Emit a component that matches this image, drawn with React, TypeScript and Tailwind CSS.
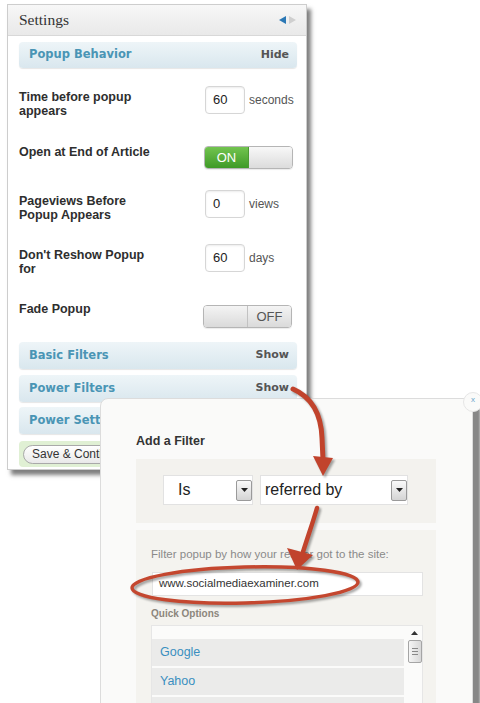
import React from "react";

function SectionHeader({ title, action, h = "h-[26px]" }: { title: string; action: string; h?: string }) {
  return (
    <div
      className={`${h} rounded-[4px] bg-linear-to-b from-[#eef5f8] to-[#d9e7ee] shadow-[0_1px_1px_rgba(0,0,0,0.10)] flex items-center justify-between pl-[10px] pr-[8px] font-['DejaVu_Sans',Verdana,sans-serif] font-bold`}
    >
      <span className="text-[11.5px] text-[#4a95b5] whitespace-nowrap">{title}</span>
      <span className="text-[11px] text-[#555]">{action}</span>
    </div>
  );
}

function NumInput({ value, unit }: { value: string; unit: string }) {
  return (
    <div className="flex items-center">
      <div className="w-[40px] h-[28px] border border-[#d6d6d6] rounded-[4px] bg-white shadow-[inset_0_1px_2px_rgba(0,0,0,0.08)] flex items-center pl-[7px] text-[13px] text-[#222]">
        {value}
      </div>
      <span className="ml-[4px] text-[12px] text-[#555]">{unit}</span>
    </div>
  );
}

function ToggleOn() {
  return (
    <div className="flex w-[89px] h-[23px] rounded-[4px] overflow-hidden border border-[#b5b5b5] shadow-[0_1px_1px_rgba(0,0,0,0.08)]">
      <div className="w-[44px] flex items-center justify-center bg-linear-to-b from-[#72c44f] to-[#3e9a27] text-white text-[13px] border-r border-[#4b9a33]">
        ON
      </div>
      <div className="flex-1 bg-linear-to-b from-[#f8f8f8] to-[#dcdcdc]" />
    </div>
  );
}

function ToggleOff() {
  return (
    <div className="flex w-[89px] h-[23px] rounded-[4px] overflow-hidden border border-[#b5b5b5] shadow-[0_1px_1px_rgba(0,0,0,0.08)]">
      <div className="w-[44px] bg-linear-to-b from-[#f4f4f4] to-[#dadada] border-r border-[#c2c2c2]" />
      <div className="flex-1 flex items-center justify-center bg-linear-to-b from-[#f4f4f4] to-[#dadada] text-[13px] text-[#555]">
        OFF
      </div>
    </div>
  );
}

function Label({ children, pt }: { children: React.ReactNode; pt: string }) {
  return (
    <div className={`w-[186px] pr-[48px] ${pt}`}>
      <p className="text-[12.5px] leading-[14px] font-bold text-[#2e2e2e]">{children}</p>
    </div>
  );
}

function SettingsPanel() {
  return (
    <div className="w-[300px] border border-[#cdcdcd] bg-white shadow-[4px_5px_4px_rgba(0,0,0,0.5)]">
      <div className="h-[31px] flex items-center justify-between pl-[11px] pr-[10px] bg-linear-to-b from-[#f7f7f7] to-[#e9e9e9] border-b border-[#d8d8d8]">
        <span className="font-['Liberation_Serif',serif] text-[15.5px] text-[#333]">Settings</span>
        <div className="flex items-center gap-[3px]">
          <svg width="7" height="8" viewBox="0 0 7 8">
            <polygon points="7,0 7,8 0,4" fill="#2b78b5" />
          </svg>
          <svg width="7" height="8" viewBox="0 0 7 8">
            <polygon points="0,0 0,8 7,4" fill="#cfcfcf" />
          </svg>
        </div>
      </div>
      <div className="pl-[11px] pr-[9px] pt-[6px] pb-[2px]">
        <SectionHeader title="Popup Behavior" action="Hide" />
        <div className="mt-[18px] h-[59px] flex items-start">
          <Label pt="pt-[4px]">Time before popup appears</Label>
          <NumInput value="60" unit="seconds" />
        </div>
        <div className="h-[45px] flex items-start">
          <Label pt="pt-0">Open at End of Article</Label>
          <div className="mt-[1px] -ml-[1px]">
            <ToggleOn />
          </div>
        </div>
        <div className="h-[54px] flex items-start">
          <Label pt="pt-[4px]">Pageviews Before Popup Appears</Label>
          <NumInput value="0" unit="views" />
        </div>
        <div className="h-[58px] flex items-start">
          <Label pt="pt-[4px]">Don't Reshow Popup for</Label>
          <NumInput value="60" unit="days" />
        </div>
        <div className="h-[40px] flex items-start">
          <Label pt="pt-0">Fade Popup</Label>
          <div className="mt-[3px] -ml-[2px]">
            <ToggleOff />
          </div>
        </div>
        <SectionHeader title="Basic Filters" action="Show" h="h-[27px]" />
        <div className="mt-[6px]">
          <SectionHeader title="Power Filters" action="Show" h="h-[27px]" />
        </div>
        <div className="mt-[5px]">
          <SectionHeader title="Power Settings" action="Show" h="h-[27px]" />
        </div>
        <div className="mt-[7px] h-[26px] rounded-[4px] bg-[#e0f0d4] flex items-center pl-[4px]">
          <div className="h-[19px] px-[8px] rounded-full border border-[#a9a9a9] bg-linear-to-b from-white to-[#e9e9e9] flex items-center text-[12px] text-[#333] whitespace-nowrap">
            Save &amp; Continue
          </div>
        </div>
      </div>
    </div>
  );
}

function SelectBox({ w, text, pl }: { w: string; text: string; pl: string }) {
  return (
    <div className={`${w} h-[30px] bg-white border border-[#e2e2e2] flex items-center justify-between ${pl} pr-[0px]`}>
      <span className="text-[16px] text-[#222]">{text}</span>
      <div className="w-[16px] h-[21px] border border-[#9a9a9a] rounded-[2px] bg-linear-to-b from-[#fafafa] to-[#d4d4d4] flex items-center justify-center">
        <svg width="7" height="4" viewBox="0 0 7 4">
          <polygon points="0,0 7,0 3.5,4" fill="#222" />
        </svg>
      </div>
    </div>
  );
}

function Popup() {
  return (
    <div className="absolute left-[100px] top-[398px] w-[373px] h-[320px] bg-[#fafaf9] border border-[#dcdcdc] rounded-tl-[8px] rounded-tr-[6px] shadow-[7px_7px_2px_rgba(0,0,0,0.47)]">
      <div className="pl-[35px] pt-[35px]">
        <p className="text-[12.5px] leading-[15px] font-bold text-[#333]">Add a Filter</p>
        <div className="mt-[10px] w-[300px] h-[64px] bg-[#f3f2ee] pt-[16px] pl-[27px] flex items-start gap-[7px]">
          <SelectBox w="w-[90px]" text="Is" pl="pl-[14px]" />
          <SelectBox w="w-[148px]" text="referred by" pl="pl-[4px]" />
        </div>
        <div className="mt-[7px] w-[300px] h-[200px] bg-[#f4f3ef] pt-[17px] pl-[15px] pr-[13px]">
          <p className="text-[11.5px] leading-[14px] text-[#8a8a8a] whitespace-nowrap">
            Filter popup by how your reader got to the site:
          </p>
          <div className="mt-[11px] ml-[1px] h-[24px] bg-white border border-[#e3e3e3] flex items-center pl-[6px] text-[11.5px] text-[#333]">
            www.socialmediaexaminer.com
          </div>
          <p className="mt-[12px] text-[10px] leading-[12px] font-bold text-[#8c867c]">Quick Options</p>
          <div className="mt-[5px] h-[100px] bg-[#fbfbfa] border border-[#e6e6e6] flex">
            <div className="w-[252px] pt-[13px] flex flex-col gap-[2px]">
              <div className="h-[27px] bg-[#ebebea] flex items-center pl-[8px] text-[12.5px] text-[#3a8fc0]">Google</div>
              <div className="h-[27px] bg-[#ebebea] flex items-center pl-[8px] text-[12.5px] text-[#3a8fc0]">Yahoo</div>
              <div className="h-[27px] bg-[#ebebea]" />
            </div>
            <div className="ml-[3px] w-[15px] flex flex-col items-center pt-[5px]">
              <svg width="7" height="4" viewBox="0 0 7 4">
                <polygon points="3.5,0 7,4 0,4" fill="#333" />
              </svg>
              <div className="mt-[5px] w-[14px] h-[23px] rounded-[2px] border border-[#a5a5a5] bg-linear-to-r from-[#f5f5f5] to-[#d8d8d8] flex flex-col items-center justify-center gap-[2px]">
                <div className="w-[6px] h-px bg-[#888]" />
                <div className="w-[6px] h-px bg-[#888]" />
                <div className="w-[6px] h-px bg-[#888]" />
              </div>
            </div>
          </div>
        </div>
      </div>
    </div>
  );
}

function CloseButton() {
  return (
    <div className="absolute left-[463px] top-[392px] w-[20px] h-[20px] rounded-full bg-[#fafaf9] border border-[#e6e6e6] flex items-start justify-center">
      <span className="mt-[3px] text-[8px] leading-[8px] text-[#6aa6cc]">x</span>
    </div>
  );
}

function Annotations() {
  return (
    <svg
      className="absolute left-0 top-0 pointer-events-none drop-shadow-[2px_2px_1px_rgba(0,0,0,0.35)]"
      width="480"
      height="703"
      viewBox="0 0 480 703"
    >
      <path d="M293 389 C 309 396, 321 411, 322 438 L 323 460" stroke="#c1432c" strokeWidth="5" fill="none" strokeLinecap="round" />
      <polygon points="313,456 333,458 323,476" fill="#c1432c" />
      <path d="M317 508 C 313 522, 308 536, 303 552" stroke="#c1432c" strokeWidth="4.5" fill="none" strokeLinecap="round" />
      <polygon points="287,548 313,555 297,570" fill="#c1432c" />
      <ellipse cx="245" cy="585" rx="113" ry="18" transform="rotate(-1.5 245 585)" stroke="#c4472f" strokeWidth="3.5" fill="none" />
    </svg>
  );
}

export default function App() {
  return (
    <div className="relative w-[480px] h-[703px] overflow-hidden bg-white font-['Liberation_Sans',Arial,sans-serif]">
      <div className="pt-[4px] pl-[7px]">
        <SettingsPanel />
      </div>
      <Popup />
      <CloseButton />
      <Annotations />
    </div>
  );
}
